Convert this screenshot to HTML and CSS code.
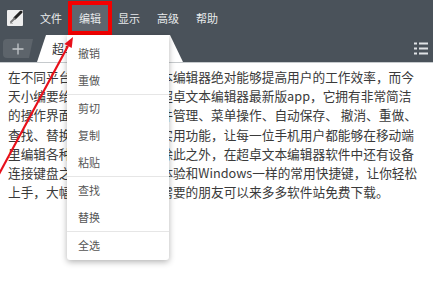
FILE: index.html
```html
<!DOCTYPE html>
<html lang="zh-CN">
<head>
  <meta charset="UTF-8">
  <meta name="viewport" content="width=device-width, initial-scale=1.0">
  <title>超卓文本编辑器</title>
  <link rel="stylesheet" href="styles.css">
</head>
<body>
  <div class="app">
    <header class="topbar">
      <nav class="menubar">
        <span class="app-icon">
          <svg width="16" height="16" viewBox="0 0 16 16">
            <rect x="0" y="0" width="16" height="16" rx="1" fill="#eeeeee"/>
            <path d="M14 2 L8 8" stroke="#222" stroke-width="3" stroke-linecap="round"/>
            <path d="M7.5 8.5 L4 12" stroke="#777" stroke-width="2" stroke-linecap="round"/>
            <path d="M3 13.5 L6 13.5" stroke="#bbb" stroke-width="1"/>
          </svg>
        </span>
        <span class="menu-item">文件</span>
        <span class="menu-item active">编辑</span>
        <span class="menu-item">显示</span>
        <span class="menu-item">高级</span>
        <span class="menu-item">帮助</span>
      </nav>
      <div class="tabbar">
        <div class="tab-add">
          <svg width="12" height="12" viewBox="0 0 12 12">
            <path d="M6 0.5 V11.5 M0.5 6 H11.5" stroke="#c3c7cb" stroke-width="1.3"/>
          </svg>
        </div>
        <div class="tab">超卓文本编辑器</div>
        <div class="tab-list">
          <svg width="14" height="13" viewBox="0 0 14 13">
            <rect x="0" y="0.5" width="3" height="2" fill="#dfe2e5"/>
            <rect x="5" y="0.5" width="9" height="2" fill="#dfe2e5"/>
            <rect x="0" y="5.5" width="3" height="2" fill="#dfe2e5"/>
            <rect x="5" y="5.5" width="9" height="2" fill="#dfe2e5"/>
            <rect x="0" y="10.5" width="3" height="2" fill="#dfe2e5"/>
            <rect x="5" y="10.5" width="9" height="2" fill="#dfe2e5"/>
          </svg>
        </div>
      </div>
    </header>

    <div class="editor">
      <div>在不同平台上，一款好用文本编辑器绝对能够提高用户的工作效率，而今</div>
      <div>天小编要给大家带来的就是超卓文本编辑器最新版app，它拥有非常简洁</div>
      <div>的操作界面，支持标签、文件管理、菜单操作、自动保存、 撤消、重做、</div>
      <div>查找、替换、跳转等十多种实用功能，让每一位手机用户都能够在移动端</div>
      <div>里编辑各种类型文本文件，除此之外，在超卓文本编辑器软件中还有设备</div>
      <div>连接键盘之后，就可以立即体验和Windows一样的常用快捷键，让你轻松</div>
      <div>上手，大幅提升效率，如有需要的朋友可以来多多软件站免费下载。</div>
    </div>

    <!-- dropdown of the 编辑 menu -->
    <ul class="dropdown">
      <li>撤销</li>
      <li>重做</li>
      <li class="sep"></li>
      <li>剪切</li>
      <li>复制</li>
      <li>粘贴</li>
      <li class="sep"></li>
      <li>查找</li>
      <li>替换</li>
      <li class="sep"></li>
      <li>全选</li>
    </ul>

    <svg class="annotation" width="433" height="302" viewBox="0 0 433 302">
      <line x1="-2" y1="176" x2="68" y2="46" stroke="#e8101a" stroke-width="2.2"/>
      <polygon points="73,37 71.7,48 64.4,44" fill="#e8101a"/>
    </svg>
  </div>
</body>
</html>
```

FILE: styles.css
```css
body {
  margin: 0;
  font-family: "Noto Sans CJK SC", "Noto Sans", sans-serif;
  background-color: #fff;
}
.app {
  position: relative;
  width: 433px;
  height: 302px;
  overflow: hidden;
}
.topbar {
  background-color: #4a525a;
}
.menubar {
  display: flex;
  align-items: center;
  height: 34px;
  padding-top: 1px;
  gap: 3px;
}
.app-icon {
  display: flex;
  margin-left: 7px;
  margin-right: 7px;
}
.menu-item {
  height: 26px;
  line-height: 26px;
  padding: 0 7px;
  font-size: 11px;
  color: #e8eaec;
}
.menu-item.active {
  background-color: #5f666e;
  outline: 4px solid #f40000;
}
.tabbar {
  display: flex;
  align-items: flex-end;
  height: 27px;
  padding-left: 3px;
  border-bottom: 1px solid #c6cacd;
}
.tab-add {
  display: flex;
  align-items: center;
  justify-content: center;
  align-self: flex-start;
  margin-top: 4px;
  width: 30px;
  height: 19px;
  background-color: #5d646b;
  border-radius: 4px 0 0 4px;
  clip-path: polygon(0 0, 100% 0, calc(100% - 4px) 100%, 0 100%);
}
.tab {
  margin-left: 4px;
  width: 146px;
  height: 27px;
  line-height: 27px;
  padding-left: 15px;
  box-sizing: border-box;
  font-size: 12px;
  color: #333;
  background-color: #fff;
  border-radius: 4px 4px 0 0;
  clip-path: polygon(0 100%, 9px 0, calc(100% - 13px) 0, 100% 100%);
}
.tab-list {
  display: flex;
  align-self: center;
  margin-left: auto;
  margin-right: 5px;
}
.editor {
  padding: 4px 8px;
  font-size: 12.7px;
  line-height: 19.2px;
  color: #3a3a3a;
  white-space: nowrap;
}
.dropdown {
  position: absolute;
  left: 67px;
  top: 35px;
  width: 102px;
  margin: 0;
  padding: 5px 0 1px;
  list-style: none;
  background-color: #fff;
  border-radius: 0 0 3px 3px;
  box-shadow: 0 2px 6px rgba(0, 0, 0, 0.3);
}
.dropdown li {
  height: 27px;
  line-height: 27px;
  padding-left: 11px;
  font-size: 11px;
  color: #555;
}
.dropdown li.sep {
  height: 1px;
  padding: 0;
  background-color: #e6e6e6;
}
.annotation {
  position: absolute;
  left: 0;
  top: 0;
  pointer-events: none;
}
```
